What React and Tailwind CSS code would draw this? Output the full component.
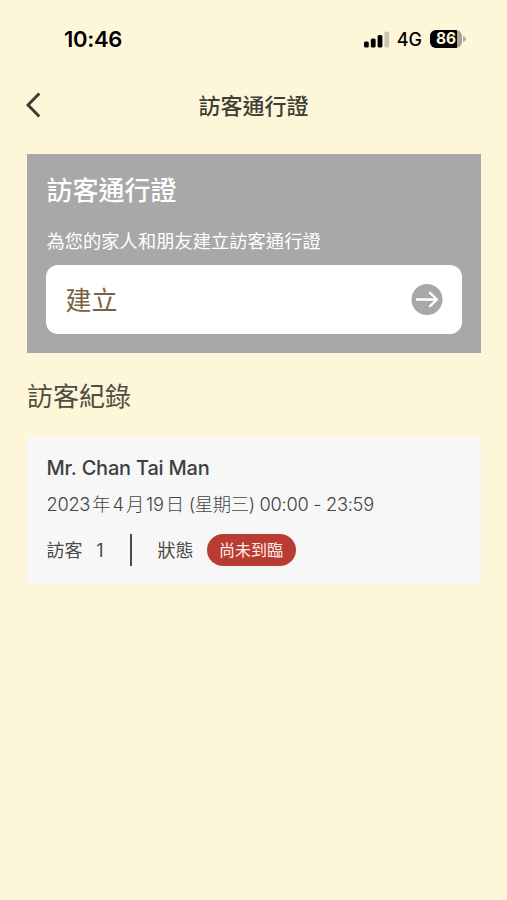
const visitors = [
  {
    id: 1,
    name: "Mr. Chan Tai Man",
    date: ["2023", "年", "4", "月", "19", "日"],
    weekday: "(星期三)",
    time: "00:00 - 23:59",
    count: 1,
    status: "尚未到臨",
  },
];

function SignalIcon() {
  return (
    <svg width="26" height="17" viewBox="0 0 26 17" className="shrink-0">
      <rect x="0" y="10.5" width="4.8" height="6" rx="1.5" fill="#000" />
      <rect x="6.8" y="7.5" width="4.8" height="9" rx="1.5" fill="#000" />
      <rect x="13.6" y="4" width="4.8" height="12.5" rx="1.5" fill="#000" />
      <rect x="20.4" y="0.5" width="4.8" height="16" rx="1.5" fill="#cdc6af" />
    </svg>
  );
}

function BatteryIcon({ level }) {
  return (
    <div className="flex items-center">
      <div className="flex h-[18px] w-[32px] items-center justify-center rounded-[6px] bg-[linear-gradient(to_right,#000_27px,#aaa593_27px)]">
        <span className="text-[15.5px] leading-none font-bold tracking-[-0.2px] text-[#fff7da]">{level}</span>
      </div>
      <svg width="4" height="6" viewBox="0 0 4 6" className="ml-px">
        <path d="M0 0c2 .6 3 1.7 3 3s-1 2.4-3 3z" fill="#b5af9b" />
      </svg>
    </div>
  );
}

function StatusBar() {
  return (
    <div className="flex h-[78px] items-center justify-between pr-[40px] pl-16">
      <span className="text-[22px] font-semibold tracking-[-0.3px] text-black">10:46</span>
      <div className="flex items-center">
        <SignalIcon />
        <span className="mr-2 ml-[7px] text-[18px] font-medium text-black">4G</span>
        <BatteryIcon level={86} />
      </div>
    </div>
  );
}

function Header() {
  return (
    <header className="grid h-[53px] grid-cols-[1fr_auto_1fr] items-center">
      <button aria-label="返回" className="ml-[26px] w-fit">
        <svg width="15" height="26" viewBox="0 0 15 26" fill="none">
          <path d="M13.3 1.5 2 13l11.3 11.5" stroke="#3f3c35" strokeWidth="3" />
        </svg>
      </button>
      <h1 className="pt-0.5 text-[22px] leading-[30px] font-medium text-[#403d35]">訪客通行證</h1>
    </header>
  );
}

function CreatePass() {
  return (
    <section className="mx-[26.5px] mt-[23px] h-[199px] bg-[#a8a8a8] px-[20px] pt-[19px] text-white">
      <h2 className="text-[26px] leading-[36px] font-medium">訪客通行證</h2>
      <p className="mt-[19px] text-[18.3px] leading-[26px]">為您的家人和朋友建立訪客通行證</p>
      <button className="mt-[11px] -ml-px flex h-[69px] w-[416px] items-center justify-between rounded-[12px] bg-white pr-[19px] pl-5">
        <span className="pt-0.5 text-[26px] leading-[36px] text-[#7c6140]">建立</span>
        <svg width="32" height="32" viewBox="0 0 32 32" fill="none">
          <circle cx="16" cy="15.5" r="15.5" fill="#a8a8a8" />
          <path
            d="M6 15.5h19.5M19 8.8l7 6.7-7 6.7"
            stroke="#fff"
            strokeWidth="2.4"
            strokeLinecap="round"
            strokeLinejoin="round"
          />
        </svg>
      </button>
    </section>
  );
}

function VisitorCard({ visitor }) {
  return (
    <li className="h-[148px] bg-[#f7f7f7] px-5 pt-[19px] text-[#4a4a4a]">
      <h3 className="text-[20px] leading-[26px] font-medium tracking-[-0.2px] text-[#3f3f3f]">
        {visitor.name}
      </h3>
      <p className="mt-[10px] flex items-baseline text-[18.3px] leading-[26px] font-light tracking-[-0.3px] whitespace-pre text-[#444]">
        <span className="flex items-baseline gap-[2.2px]">
          {visitor.date.map((part) => (
            <span key={part}>{part}</span>
          ))}
        </span>
        <span> {visitor.weekday} {visitor.time}</span>
      </p>
      <div className="mt-[17px] flex h-8 items-center text-[18px]">
        <span>訪客</span>
        <span className="ml-[13px] w-[9px] text-center">{visitor.count}</span>
        <span className="ml-[25px] h-8 w-[2px] bg-[#4a4a4a]" />
        <span className="ml-[26px]">狀態</span>
        <span className="ml-[13px] flex h-8 w-[89px] items-center justify-center rounded-full bg-[#b83c32] text-[16px] text-[#ffeceb]">
          {visitor.status}
        </span>
      </div>
    </li>
  );
}

export default function App() {
  return (
    <div className="min-h-screen w-full bg-[#fef6d9] font-['Inter','Noto_Sans_CJK_TC',sans-serif]">
      <StatusBar />
      <Header />
      <main>
        <CreatePass />
        <h2 className="mx-[27px] mt-[26px] text-[26px] leading-[36px] text-[#504c41]">訪客紀錄</h2>
        <ul className="mx-[26.5px] mt-[21px]">
          {visitors.map((visitor) => (
            <VisitorCard key={visitor.id} visitor={visitor} />
          ))}
        </ul>
      </main>
    </div>
  );
}
